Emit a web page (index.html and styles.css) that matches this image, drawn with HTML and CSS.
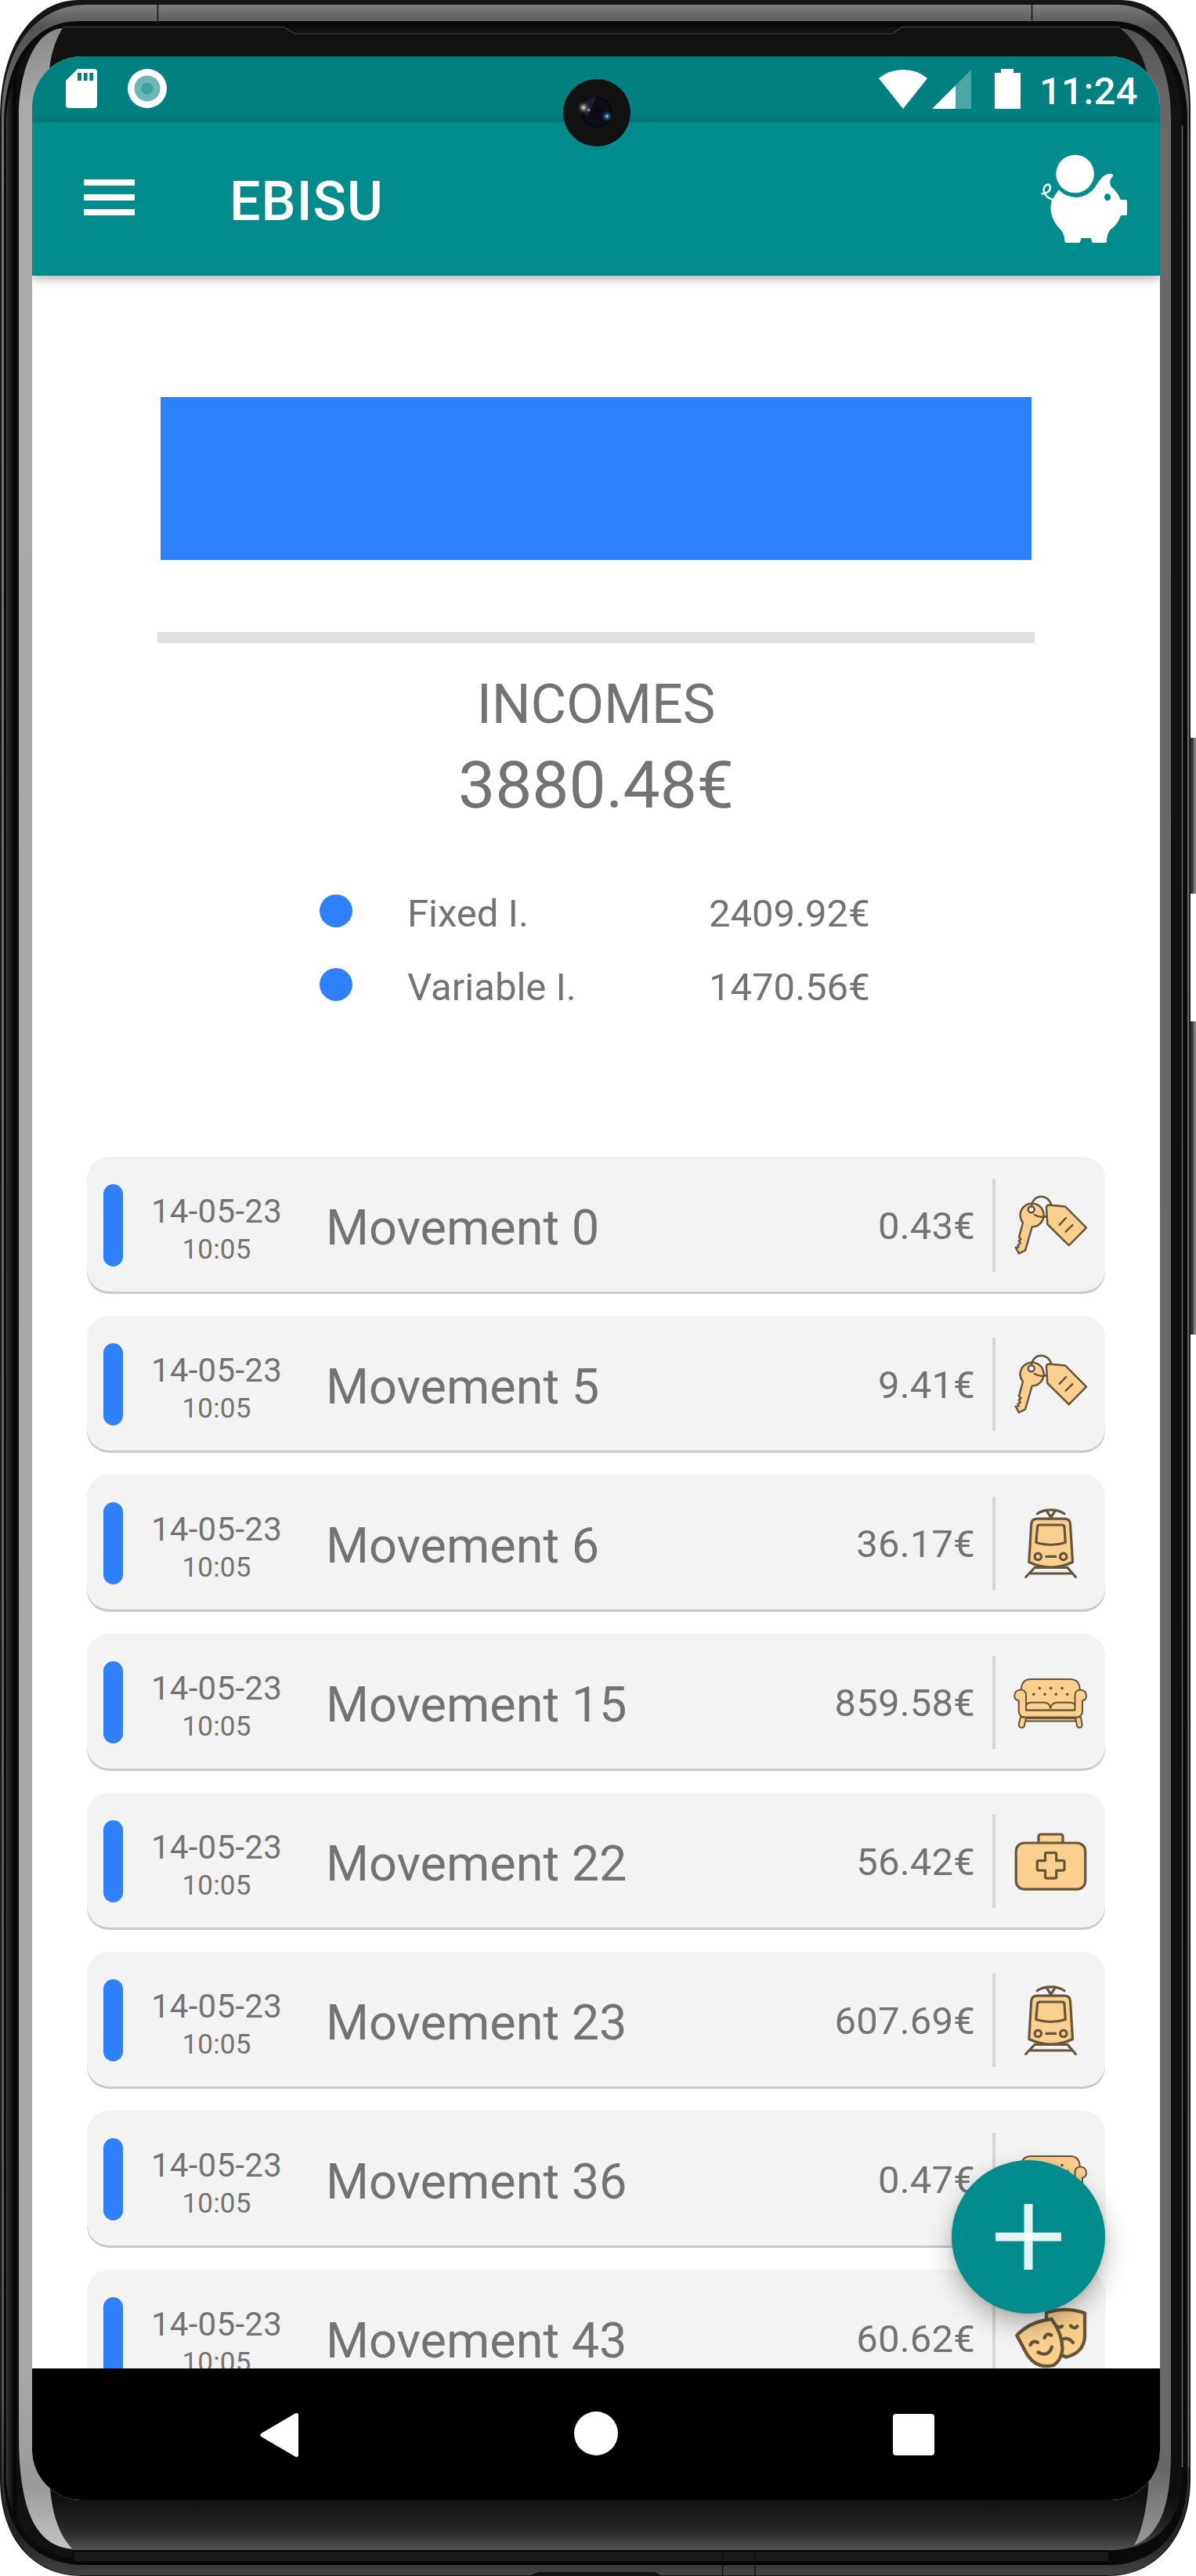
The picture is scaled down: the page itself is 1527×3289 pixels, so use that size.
FILE: index.html
```html
<!DOCTYPE html>
<html lang="en">
<head>
<meta charset="utf-8">
<title>Ebisu</title>
<link rel="stylesheet" href="styles.css">
</head>
<body>
<svg width="0" height="0" class="defs" aria-hidden="true">
  <defs>
    <symbol id="keys" viewBox="0 0 94 94">
      <g class="line" stroke-width="2.5">
        <path class="fill" d="M12 44 7 62.500 9.500 65 6.800 67.500 8.800 70.500 5.500 72.500 6.700 75 2.800 75.700 7 83.500 15 79.300 23.700 49.500A15 15 0 1 0 12 44Z"/>
        <circle class="hole" cx="22.700" cy="27.200" r="4"/>
        <path d="M22.700 23.500C24.500 14 30 10.800 35.500 10.800S46.500 14.500 48.300 21.900M26.700 34Q34.500 38.500 42 36"/>
        <path class="fill" d="M42 25Q42 21.500 45.500 21.500L66 23.400 93 50.600 70.700 73.200 43.300 46Z"/>
        <path d="M58.700 46.800 67 38M66.700 55.600 75.300 47.100"/>
      </g>
    </symbol>
    <symbol id="tram" viewBox="0 0 94 94">
      <g class="line" stroke-width="3.2">
        <path d="M30.300 9.700C39 3.200 56 3.200 65 9.700M42.700 6.500 47.700 14.700 52.700 6.500"/>
        <path class="fill" d="M22.700 23Q23 16.200 31 16.200H64.500Q72 16.200 72.500 23L75.500 71.500Q62 78 47.700 78T19.800 71.500Z"/>
        <path d="M30.500 27Q30.700 24 33.500 24H62Q64.700 24 65 27L66.200 46.500Q57 49.500 47.700 49.500T28.800 46.500Z"/>
        <circle cx="31.300" cy="64.400" r="4.200"/>
        <circle cx="63.700" cy="64.400" r="4.200"/>
        <path d="M41.800 64.400H53.700M27 78.500H69M22.500 86H74.500M27 78.500 15.700 90.500M69 78.500 79.300 90.500"/>
      </g>
    </symbol>
    <symbol id="sofa" viewBox="0 0 94 94">
      <g class="line" stroke-width="2">
        <path d="M15 68H79V71.500H15Z" class="fill"/>
        <path class="fill" d="M9 66.500 6.800 75.500C5.800 81 13 81 14 77L16.200 66.500ZM86 66.500 87.500 75.500C88.500 81 82 81 81 77L79 66.500Z"/>
        <path class="fill" d="M9.800 32C10 22 14 18 22 18H72C80 18 84.700 22 84.700 32V60H9.800Z"/>
        <path class="fill" d="M16 57.500V52Q17 47.700 23 47.700H39Q46 47.700 47.300 55Q48.500 47.700 56 47.700H72Q78 47.700 79 52V57.500Z"/>
        <path class="fill" d="M16 57.700V38C16 29 1.200 29.500 1.200 39Q1.200 44.500 6.700 45.500V58Q6.700 66.500 15 66.500H80Q88 66.500 88 58V45.500Q93 44.500 93 39C93 29.500 78.500 29 78.500 38V57.700Z"/>
      </g>
      <g fill="#65553a"><circle cx="33.300" cy="29.500" r="1.800"/><circle cx="47.700" cy="29.500" r="1.800"/><circle cx="62" cy="29.500" r="1.800"/><circle cx="25.700" cy="37.200" r="1.800"/><circle cx="40" cy="37.200" r="1.800"/><circle cx="54.300" cy="37.200" r="1.800"/><circle cx="68.700" cy="37.200" r="1.800"/></g>
    </symbol>
    <symbol id="medkit" viewBox="0 0 94 94">
      <g class="line" stroke-width="3.200">
        <path class="fill" d="M32 24V16Q32 13 35 13H60Q63 13 63 16V24"/>
        <rect class="fill" x="3.200" y="24" width="88.500" height="59.200" rx="10.500"/>
        <path d="M42 36.700H53Q54.700 36.700 54.700 38.500V46.700H63Q65 46.700 65 48.500V57.500Q65 59.200 63 59.200H54.700V67.500Q54.700 69.200 53 69.200H42Q40.500 69.200 40.500 67.500V59.200H32Q30.300 59.200 30.300 57.500V48.500Q30.300 46.700 32 46.700H40.500V38.500Q40.500 36.700 42 36.700Z"/>
      </g>
    </symbol>
    <symbol id="masks" viewBox="0 0 94 94">
      <g class="line" stroke-width="4.300">
        <path class="fill" d="M42 15Q66 6.500 91 15.300V45Q90 66 67 71.500L58 67 42 26Z"/>
        <path d="M56 32.500Q59 34.500 62 32M73 31.500Q77.500 36.500 81.500 32M60 49.500Q69 44.500 76 53"/>
        <path class="fill" d="M4.300 43.700Q21 26 48.700 23Q62.500 42 62.500 62Q60 77 51 82Q27 88 14.500 63Z"/>
        <path d="M21.500 56Q24 49.500 31 52.700M39.500 47Q42 40 48.300 43.500M31.500 65.300C40 70.500 47 66.500 49 58.500"/>
      </g>
    </symbol>
  </defs>
</svg>

<div class="device">
  <svg class="frame" viewBox="0 0 1527 3289" aria-hidden="true">
    <defs>
      <linearGradient id="edge" x1="0" y1="0" x2="0" y2="1"><stop offset="0" stop-color="#7d7d7d"/><stop offset=".0085" stop-color="#555"/><stop offset=".06" stop-color="#777"/><stop offset=".93" stop-color="#555"/><stop offset=".97" stop-color="#2c2c2c"/><stop offset=".985" stop-color="#222"/><stop offset="1" stop-color="#424242"/></linearGradient>
      <linearGradient id="face" x1="0" y1="0" x2="0" y2="1"><stop offset="0" stop-color="#121212"/><stop offset=".978" stop-color="#0e0e0e"/><stop offset=".992" stop-color="#262626"/><stop offset="1" stop-color="#505050"/></linearGradient>
      <linearGradient id="leftdark" x1="6" x2="24" y1="0" y2="0" gradientUnits="userSpaceOnUse"><stop offset="0" stop-color="#555"/><stop offset=".25" stop-color="#262626"/><stop offset=".7" stop-color="#060606"/><stop offset="1" stop-color="#111"/></linearGradient>
      <linearGradient id="silver" x1="0" x2="0" y1="0" y2="1"><stop offset="0" stop-color="#888"/><stop offset=".03" stop-color="#aaa"/><stop offset=".93" stop-color="#a8a8a8"/><stop offset=".975" stop-color="#999"/><stop offset="1" stop-color="#c4c4c4"/></linearGradient>
      <linearGradient id="band" x1="0" x2="0" y1="0" y2="1"><stop offset="0" stop-color="#555"/><stop offset=".03" stop-color="#686868"/><stop offset=".97" stop-color="#686868"/><stop offset="1" stop-color="#999"/></linearGradient>
      <linearGradient id="key" x1="0" x2="1" y1="0" y2="0"><stop offset="0" stop-color="#202020"/><stop offset=".4" stop-color="#383838"/><stop offset=".6" stop-color="#888"/><stop offset="1" stop-color="#4a4a4a"/></linearGradient>
    </defs>
    <rect x="1517" y="942" width="14" height="199" rx="4" fill="url(#key)"/>
    <rect x="1517" y="1304" width="14" height="400" rx="4" fill="url(#key)"/>
    <path d="M100 0H1430C1490 0 1520 60 1520 140V3165C1520 3240 1475 3289 1415 3289H105C40 3289 0 3240 0 3165V150C0 55 45 0 100 0Z" fill="#151515"/>
    <path d="M110 6H1425C1485 6 1518 65 1518 140V3165C1518 3240 1475 3288 1415 3288H105C40 3288 2 3240 2 3165V150C2 60 48 6 110 6Z" fill="url(#edge)"/>
    <path d="M100 27H1420C1480 27 1516 85 1516 150V3165C1516 3232 1475 3275 1415 3275H108C45 3275 5 3232 5 3165V160C5 75 45 27 100 27Z" fill="#0a0a0a"/>
    <path d="M90 35C40 38 8 95 8 160V3160C8 3220 45 3266 100 3266L92 3254 24 3180V100L80 36Z" fill="url(#leftdark)"/>
    <path d="M80 35H1430C1480 37 1509 90 1509 160V3160C1509 3225 1470 3256 1415 3256H95C45 3250 22 3190 22 3150V160C22 90 45 40 80 35Z" fill="url(#face)"/>
    <path d="M1509.500 160V3150M1517.500 170V3150" stroke="#666" stroke-width="1.500" fill="none"/>
    <path d="M95 3257H1415M98 3273H1415" stroke="#000" stroke-width="2"/>
    <path d="M95 3258H1415V3270H95Z" fill="#1a1a1a"/>
    <path d="M675 3289 688 3284H836L846 3289Z" fill="#111"/>
    <path d="M80 36C45 38 24 90 24 150V3110C24 3190 40 3252 92 3254C70 3230 62 3195 62 3130V110C62 75 70 52 80 36Z" fill="url(#silver)"/>
    <path d="M1430 36C1475 40 1495 90 1495 150V3130C1495 3190 1485 3235 1448 3250C1462 3225 1468 3180 1468 3130V110C1463 75 1450 52 1430 36Z" fill="url(#band)"/>
    <path d="M80 34.500H362L376 43H1140L1151 34.500H1430" stroke="#444" stroke-width="1.200" fill="none"/>
    <path d="M201.500 6V31M1317.500 4V26M922.500 3257V3288M964 3257V3288" stroke="#111" stroke-width="1.500"/>
  </svg>

  <div class="screen">
    <header class="status">
      <svg class="status-left" viewBox="0 0 130 50" width="130" height="50">
        <path fill="#fff" d="M15 0H36Q40 0 40 4V46Q40 50 36 50H4Q0 50 0 46V15Z"/>
        <path fill="#008080" d="M15 5H20V15H15ZM22.800 5H27.600V15H22.800ZM30.300 5H35.200V15H30.300Z"/>
        <circle cx="104" cy="25" r="25" fill="#fff"/><circle cx="104" cy="25" r="16.500" fill="#6db7b7"/><circle cx="104" cy="25" r="7.500" fill="#40a0a0"/>
      </svg>
      <div class="status-right">
        <svg viewBox="0 0 182 52" width="182" height="52">
          <path fill="#fff" d="M31 51 0 12Q13 1 31 1T62 12Z"/>
          <path fill="#fff" d="M68 51H98V21Z"/>
          <path fill="#4da6a6" d="M98 51H118V1L98 21Z"/>
          <path fill="#fff" d="M156 0H172V5H181V51H148V5H156Z"/>
        </svg>
        <span class="clock">11:24</span>
      </div>
    </header>

    <div class="appbar">
      <svg class="menu" viewBox="0 0 65 47" width="65" height="47"><path fill="#fff" d="M0 0H65V8H0ZM0 19H65V27H0ZM0 38H65V46H0Z"/></svg>
      <h1>EBISU</h1>
      <svg class="pig" viewBox="0 0 118 118" width="118" height="118">
        <circle cx="47.600" cy="26" r="24.300" fill="#fff"/>
        <path fill="#fff" d="M26.700 46.300A29.500 29.500 0 0 0 73 43C78 36 82 26 93.400 25.700Q97 27 95.900 29Q90 34 93.500 42.300Q102 49 105.600 59H112Q114 59 114 62V76Q114 79 112 79H106Q102 91 92.500 97.300Q88 103 88 112Q88 114 86 114H71Q69 114 69 112L67.600 108H55.400L54.500 112Q54.500 114 52 114H36.500Q34.500 114 34.500 112 34 101 27.700 95.700C18 85 14 72 18 60Q22 53 26.700 46.300Z"/>
        <ellipse cx="89" cy="55.700" rx="4" ry="4.500" fill="#008c8c"/>
        <path d="M4.500 51.500Q15 51 16 44Q15.500 38 11 40C5 44 7 55 19 59" fill="none" stroke="#fff" stroke-width="2.400"/>
      </svg>
    </div>

    <main class="content">
      <section class="summary">
        <div class="chart"></div>
        <div class="divider"></div>
        <div class="label">INCOMES</div>
        <div class="total">3880.48€</div>
        <div class="legend">
          <i class="dot"></i><span>Fixed I.</span><span>2409.92€</span>
          <i class="dot"></i><span>Variable I.</span><span>1470.56€</span>
        </div>
      </section>

      <section class="list">
        <article class="card"><i class="mark"></i><div class="when"><span class="date">14-05-23</span><span class="time">10:05</span></div><div class="name">Movement 0</div><div class="amount">0.43€</div><i class="rule"></i><svg class="icon"><use href="#keys"/></svg></article>
        <article class="card"><i class="mark"></i><div class="when"><span class="date">14-05-23</span><span class="time">10:05</span></div><div class="name">Movement 5</div><div class="amount">9.41€</div><i class="rule"></i><svg class="icon"><use href="#keys"/></svg></article>
        <article class="card"><i class="mark"></i><div class="when"><span class="date">14-05-23</span><span class="time">10:05</span></div><div class="name">Movement 6</div><div class="amount">36.17€</div><i class="rule"></i><svg class="icon"><use href="#tram"/></svg></article>
        <article class="card"><i class="mark"></i><div class="when"><span class="date">14-05-23</span><span class="time">10:05</span></div><div class="name">Movement 15</div><div class="amount">859.58€</div><i class="rule"></i><svg class="icon"><use href="#sofa"/></svg></article>
        <article class="card"><i class="mark"></i><div class="when"><span class="date">14-05-23</span><span class="time">10:05</span></div><div class="name">Movement 22</div><div class="amount">56.42€</div><i class="rule"></i><svg class="icon"><use href="#medkit"/></svg></article>
        <article class="card"><i class="mark"></i><div class="when"><span class="date">14-05-23</span><span class="time">10:05</span></div><div class="name">Movement 23</div><div class="amount">607.69€</div><i class="rule"></i><svg class="icon"><use href="#tram"/></svg></article>
        <article class="card"><i class="mark"></i><div class="when"><span class="date">14-05-23</span><span class="time">10:05</span></div><div class="name">Movement 36</div><div class="amount">0.47€</div><i class="rule"></i><svg class="icon"><use href="#sofa"/></svg></article>
        <article class="card"><i class="mark"></i><div class="when"><span class="date">14-05-23</span><span class="time">10:05</span></div><div class="name">Movement 43</div><div class="amount">60.62€</div><i class="rule"></i><svg class="icon"><use href="#masks"/></svg></article>
      </section>

      <button class="fab" aria-label="Add">
        <svg viewBox="0 0 84 84" width="84" height="84"><path stroke="#e6f3f3" stroke-width="11" d="M42 0V84M0 42H84"/><circle cx="42" cy="42" r="5" fill="#fff"/></svg>
      </button>
    </main>

    <nav class="navbar">
      <svg viewBox="0 0 50 58" width="50" height="58"><path fill="#fff" stroke="#fff" stroke-width="5" stroke-linejoin="round" d="M46.500 3.500V54.500L3 29Z"/></svg>
      <i class="home"></i>
      <i class="recent"></i>
    </nav>
  </div>

  <svg class="camera" viewBox="0 0 86 86" aria-hidden="true">
    <defs>
      <radialGradient id="lens"><stop offset="0" stop-color="#0c0810"/><stop offset=".75" stop-color="#0e0c18"/><stop offset="1" stop-color="#06070a"/></radialGradient>
      <radialGradient id="glowA"><stop offset="0" stop-color="#f2f4e8"/><stop offset=".35" stop-color="#8a9080" stop-opacity=".8"/><stop offset="1" stop-color="#333" stop-opacity="0"/></radialGradient>
      <radialGradient id="glowB"><stop offset="0" stop-color="#d8f0ff"/><stop offset=".3" stop-color="#2f6f9e" stop-opacity=".9"/><stop offset="1" stop-color="#123" stop-opacity="0"/></radialGradient>
      <radialGradient id="glowC"><stop offset="0" stop-color="#f4c8e4"/><stop offset=".4" stop-color="#7a4a78" stop-opacity=".8"/><stop offset="1" stop-color="#223" stop-opacity="0"/></radialGradient>
    </defs>
    <circle cx="43" cy="43" r="43" fill="#111"/>
    <circle cx="43" cy="42.500" r="20" fill="url(#lens)"/>
    <path d="M27 30Q33 24 42 23L31 48Q24 42 27 30Z" fill="#26304a" opacity=".6"/>
    <circle cx="26" cy="36.500" r="8" fill="url(#glowA)"/>
    <circle cx="32.500" cy="39.500" r="4" fill="url(#glowC)"/>
    <circle cx="56" cy="47.500" r="7.500" fill="url(#glowB)"/>
  </svg>
</div>
</body>
</html>
```
FILE: styles.css
```css
* { box-sizing: border-box; }
body { margin: 0; background: #fff; font-family: Roboto, "Liberation Sans", sans-serif; color: #737373; }
.defs { position: absolute; }

.device { position: relative; width: 1527px; height: 3289px; padding: 72px 46px 97px 41px; overflow: hidden; }
.frame { position: absolute; inset: 0; width: 1527px; height: 3289px; }
.camera { position: absolute; z-index: 5; left: 719px; top: 101px; width: 86px; height: 86px; }
.screen {
  position: relative;
  display: flex;
  flex-direction: column;
  width: 1440px;
  height: 3120px;
  border-radius: 64px;
  overflow: hidden;
  background: #fff;
}

.status { display: flex; justify-content: space-between; flex: none; height: 84px; padding: 16px 28px 0 43px; background: #008080; }
.status-right { display: flex; gap: 23px; }
.clock { margin-top: 1px; font-size: 49px; font-weight: 500; line-height: 56px; letter-spacing: .3px; color: #fff; }

.appbar {
  position: relative;
  z-index: 1;
  display: flex;
  flex: none;
  height: 196px;
  padding: 0 38px 0 66px;
  background: #008c8c;
  box-shadow: 0 3px 12px rgba(0, 0, 0, .35);
}
.menu { margin-top: 73px; }
.appbar h1 { flex: 1; margin: 61px 0 0 121px; font-size: 70px; font-weight: 500; line-height: 80px; letter-spacing: 1px; color: #fff; }
.pig { margin-top: 40px; }

.content { position: relative; height: 2672px; overflow: hidden; }
.summary { display: flex; flex-direction: column; align-items: center; padding-top: 155px; }
.chart { width: 1112px; height: 208px; background: #2f80fd; }
.divider { width: 1120px; height: 14px; margin-top: 92px; background: #e0e0e0; }
.label { margin-top: 37px; font-size: 70px; line-height: 82px; letter-spacing: -.1px; }
.total { margin-top: 14px; font-size: 84px; line-height: 98px; letter-spacing: -.1px; }
.legend {
  display: grid;
  grid-template-columns: 112px 385px 213px;
  row-gap: 36px;
  margin-top: 86px;
  padding-left: 4px;
  font-size: 49px;
  line-height: 58px;
}
.dot { width: 42px; height: 42px; margin-top: 4px; border-radius: 50%; background: #2f80fd; }

.list { display: flex; flex-direction: column; gap: 31px; padding: 187px 70px 0; }
.card {
  display: grid;
  grid-template-columns: 25px 239px 1fr auto 4px 117px;
  height: 172px;
  padding: 0 23px 0 21px;
  border-radius: 28px;
  background: #f3f3f3;
  box-shadow: 0 3px 0 #c8c8c8;
}
.mark { height: 105px; margin-top: 35px; border-radius: 13px; background: #2f80fd; }
.when { display: flex; flex-direction: column; align-items: center; gap: 2px; padding-top: 45px; }
.date { font-size: 42px; line-height: 50px; letter-spacing: .3px; }
.time { font-size: 35px; line-height: 44px; letter-spacing: .2px; }
.name { padding: 54px 0 0 20px; font-size: 63px; line-height: 74px; }
.amount { padding: 60px 22px 0 0; font-size: 49px; line-height: 58px; letter-spacing: .2px; }
.rule { height: 119px; margin-top: 28px; background: #d5d5d5; }
.icon { width: 94px; height: 94px; margin: 40px 0 0 23px; }
.line { fill: none; stroke: #65553a; stroke-linecap: round; stroke-linejoin: round; }
.fill { fill: #fbd08f; }
.hole { fill: #f3f3f3; }

.fab {
  position: absolute;
  left: 1174px;
  top: 2406px;
  display: grid;
  place-items: center;
  width: 196px;
  height: 196px;
  padding: 0;
  border: 0;
  border-radius: 50%;
  background: #008c8c;
  box-shadow: 0 14px 32px rgba(0, 0, 0, .28), 0 2px 6px rgba(0, 0, 0, .1);
}

.navbar { display: flex; justify-content: space-between; flex: none; height: 168px; padding: 0 288px 0 291px; background: #000; }
.navbar svg { margin-top: 56px; }
.home { width: 56px; height: 56px; margin-top: 55px; border-radius: 50%; background: #fff; }
.recent { width: 53px; height: 53px; margin-top: 58px; border-radius: 4px; background: #fff; }
```
